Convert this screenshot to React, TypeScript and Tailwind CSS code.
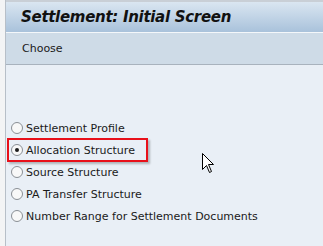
import React from "react";

const OPTIONS = [
  "Settlement Profile",
  "Allocation Structure",
  "Source Structure",
  "PA Transfer Structure",
  "Number Range for Settlement Documents",
];

const SELECTED = "Allocation Structure";

function Radio({ checked }: { checked: boolean }) {
  return (
    <span className="flex h-[12px] w-[12px] shrink-0 items-center justify-center rounded-full border border-[#8a8f95] bg-[#f8f8f8]">
      {checked && <span className="h-[4px] w-[4px] rounded-full bg-[#1c1c1c]" />}
    </span>
  );
}

function Cursor() {
  return (
    <svg width="13" height="21" viewBox="0 0 13 21" className="absolute left-[202px] top-[153px]">
      <path
        d="M0.5 0.5 L0.5 16.5 L4.5 12.5 L7.5 19.5 L9.5 18.5 L6.5 11.5 L11.5 11.5 Z"
        fill="#fff"
        stroke="#000"
        strokeWidth="1"
        strokeLinejoin="miter"
      />
    </svg>
  );
}

export default function App() {
  return (
    <div
      className="relative flex h-[246px] w-[323px] overflow-hidden bg-[#f6f7f8]"
      style={{ fontFamily: "'DejaVu Sans', Tahoma, sans-serif" }}
    >
      {/* left gutter */}
      <div className="w-[6px] shrink-0 border-r border-[#b7bfc8] bg-[#f3f4f5]" />

      <div className="flex flex-1 flex-col">
        {/* title bar */}
        <div className="h-[33px] shrink-0 border-t-2 border-b border-t-[#c9cfd6] border-b-[#f4f7fa] bg-gradient-to-b from-[#dae6f1] to-[#a9c2db] pl-[15px] pt-[6px]">
          <h1 className="text-[15px] font-bold italic leading-[18px] tracking-[-0.3px] text-[#111]">
            Settlement: Initial Screen
          </h1>
        </div>

        {/* application toolbar */}
        <div className="flex h-[32px] shrink-0 items-center border-b border-[#a8b2bd] bg-[#cedbe7] pl-[16px] pt-[2px] text-[11px] text-[#1a1a1a]">
          Choose
        </div>

        {/* content */}
        <div className="flex flex-1 flex-col bg-[#e9eff6] pl-[5px] pt-[52px] text-[11px] text-[#1a1a1a]">
          {OPTIONS.map((label) => (
            <label key={label} className="flex h-[22px] items-center gap-[3px]">
              <Radio checked={label === SELECTED} />
              <span className="leading-none">{label}</span>
            </label>
          ))}
        </div>
      </div>

      {/* annotation box */}
      <div className="absolute left-[7px] top-[138px] h-[24px] w-[141px] border-2 border-[#e8101a] shadow-[2px_2px_2px_rgba(0,0,0,0.25)]" />

      <Cursor />
    </div>
  );
}
